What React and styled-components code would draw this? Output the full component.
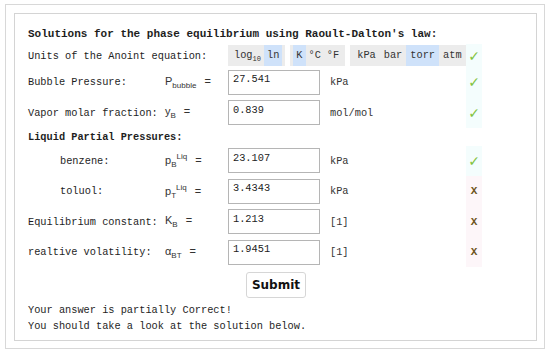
import React from "react";
import styled, { createGlobalStyle } from "styled-components";

const Global = createGlobalStyle`
  body {
    margin: 0;
    background: #fff;
    font-family: "Liberation Mono", "DejaVu Sans Mono", monospace;
    font-size: 10.3px;
    color: #1e1e1e;
  }
`;

const Frame = styled.div`
  margin: 4px 5px;
  width: 540px;
  height: 345px;
  box-sizing: border-box;
  border: 1px solid #d8d8d8;
  padding: 8px 7px 7px 8px;
`;

const Panel = styled.div`
  height: 100%;
  box-sizing: border-box;
  border: 1px solid #d4d4d4;
  padding: 12px 0 0 13px;
`;

const Title = styled.div`
  font-weight: bold;
  font-size: 11px;
  height: 18px;
  line-height: 16px;
`;

const Row = styled.div`
  display: grid;
  grid-template-columns: ${(p) => (p.indent ? "105px" : "137px")} 63px 92px 146px 20px;
  padding-left: ${(p) => (p.indent ? "32px" : "0")};
  align-items: center;
  height: ${(p) => p.h || 30.4}px;
  white-space: nowrap;
`;

const Units = styled.div`
  display: flex;
  gap: 5px;
  grid-column: 3 / 5;
`;

const Group = styled.div`
  display: flex;
  background: #ececec;
  padding: 0 3px;
  height: 21px;
  align-items: center;
`;

const Opt = styled.span`
  padding: 0 ${(p) => p.pad || 3}px;
  height: 21px;
  line-height: 21px;
  background: ${(p) => (p.on ? "#cfe2fa" : "transparent")};
  color: #333;
  sub {
    font-size: 7px;
  }
`;

const Sym = styled.span`
  font-family: "Liberation Sans", Arial, sans-serif;
  font-size: 11px;
  color: #333;
  sub,
  sup {
    font-size: 8px;
  }
  sub {
    vertical-align: -3px;
  }
  sup {
    vertical-align: 5px;
  }
`;

const Eq = styled.span`
  margin-left: 8px;
`;

const Field = styled.input`
  width: 92px;
  height: 25px;
  box-sizing: border-box;
  border: 1px solid #b5b5b5;
  font-family: "Liberation Mono", monospace;
  font-size: 10.3px;
  padding: 0 4px 6px;
  color: #222;
  outline: none;
`;

const Unit = styled.span`
  padding-left: 10px;
  color: #333;
`;

const Status = styled.span`
  width: 16px;
  height: 100%;
  display: flex;
  align-items: center;
  justify-content: center;
  font-family: ${(p) => (p.ok ? '"DejaVu Sans", sans-serif' : '"Liberation Mono", monospace')};
  font-weight: ${(p) => (p.ok ? "normal" : "bold")};
  font-size: ${(p) => (p.ok ? 14 : 11)}px;
  color: ${(p) => (p.ok ? "#82c341" : "#6d5520")};
  background: ${(p) => (p.ok ? "#f4fdfd" : "#fdf6f9")};
`;

const Section = styled.div`
  font-weight: bold;
  height: 18px;
  line-height: 18px;
`;

const SubmitWrap = styled.div`
  display: flex;
  justify-content: center;
  padding: 5px 0 0;
  width: 496px;
`;

const Submit = styled.button`
  font-family: "DejaVu Sans", Verdana, sans-serif;
  font-weight: bold;
  font-size: 12px;
  color: #111;
  background: #fff;
  border: 1px solid #d6d6d6;
  border-radius: 3px;
  padding: 0 5px;
  height: 26px;
`;

const Msg = styled.div`
  margin-top: 4px;
  line-height: 16px;
`;

const rows = [
  { label: "Bubble Pressure:", sym: <>P<sub>bubble</sub></>, val: "27.541", unit: "kPa", ok: true },
  { label: "Vapor molar fraction:", sym: <>y<sub>B</sub></>, val: "0.839", unit: "mol/mol", ok: true },
];

const partial = [
  { label: "benzene:", sym: <>p<sub>B</sub><sup>Liq</sup></>, val: "23.107", unit: "kPa", ok: true },
  { label: "toluol:", sym: <>p<sub>T</sub><sup>Liq</sup></>, val: "3.4343", unit: "kPa", ok: false },
];

const tail = [
  { label: "Equilibrium constant:", sym: <>K<sub>B</sub></>, val: "1.213", unit: "[1]", ok: false },
  { label: "realtive volatility:", sym: <>α<sub>BT</sub></>, val: "1.9451", unit: "[1]", ok: false },
];

function Line({ r, indent }) {
  return (
    <Row indent={indent}>
      <span>{r.label}</span>
      <Sym>
        {r.sym}
        <Eq>=</Eq>
      </Sym>
      <Field defaultValue={r.val} />
      <Unit>{r.unit}</Unit>
      <Status ok={r.ok}>{r.ok ? "✓" : "X"}</Status>
    </Row>
  );
}

export default function App() {
  return (
    <>
      <Global />
      <Frame>
        <Panel>
          <Title>Solutions for the phase equilibrium using Raoult-Dalton's law:</Title>
          <Row h={23}>
            <span style={{ gridColumn: "1 / 3" }}>Units of the Anoint equation:</span>
            <Units>
              <Group>
                <Opt>log<sub>10</sub></Opt>
                <Opt on>ln</Opt>
              </Group>
              <Group>
                <Opt on>K</Opt>
                <Opt>°C</Opt>
                <Opt>°F</Opt>
              </Group>
              <Group>
                <Opt pad={4}>kPa</Opt>
                <Opt pad={4}>bar</Opt>
                <Opt pad={4} on>torr</Opt>
                <Opt pad={4}>atm</Opt>
              </Group>
            </Units>
            <Status ok>✓</Status>
          </Row>
          {rows.map((r) => (
            <Line key={r.label} r={r} />
          ))}
          <Section>Liquid Partial Pressures:</Section>
          {partial.map((r) => (
            <Line key={r.label} r={r} indent />
          ))}
          {tail.map((r) => (
            <Line key={r.label} r={r} />
          ))}
          <SubmitWrap>
            <Submit>Submit</Submit>
          </SubmitWrap>
          <Msg>
            Your answer is partially Correct!
            <br />
            You should take a look at the solution below.
          </Msg>
        </Panel>
      </Frame>
    </>
  );
}
